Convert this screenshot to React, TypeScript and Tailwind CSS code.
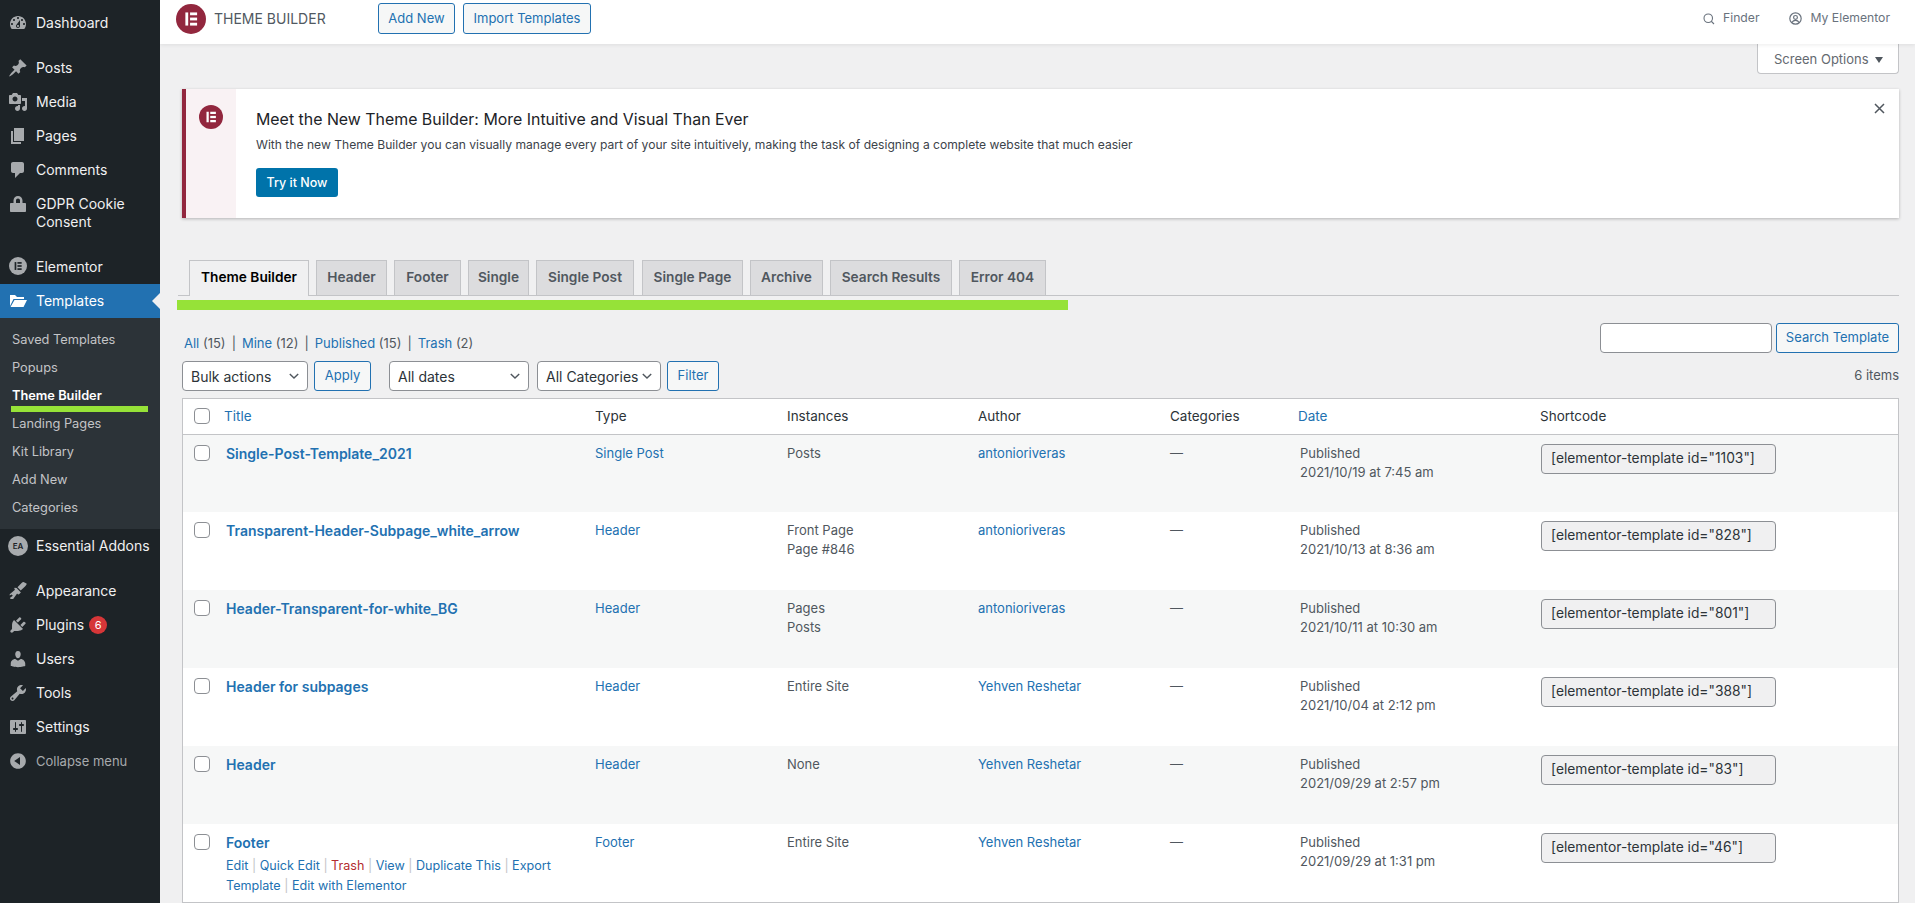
import React from "react";

const I: Record<string, string> = {
  dashboard:
    "M3.76 16h12.48c1.1-1.37 1.76-3.11 1.76-5 0-4.42-3.58-8-8-8s-8 3.58-8 8c0 1.89.66 3.63 1.76 5zM10 4c.55 0 1 .45 1 1s-.45 1-1 1-1-.45-1-1 .45-1 1-1zM6 6c.55 0 1 .45 1 1s-.45 1-1 1-1-.45-1-1 .45-1 1-1zm8 0c.55 0 1 .45 1 1s-.45 1-1 1-1-.45-1-1 .45-1 1-1zm-5.37 5.55L12 7v6c0 1.1-.9 2-2 2s-2-.9-2-2c0-.57.24-1.08.63-1.45zM4 10c.55 0 1 .45 1 1s-.45 1-1 1-1-.45-1-1 .45-1 1-1zm12 0c.55 0 1 .45 1 1s-.45 1-1 1-1-.45-1-1 .45-1 1-1zm-5 3c0-.55-.45-1-1-1s-1 .45-1 1 .45 1 1 1 1-.45 1-1z",
  post: "M10.44 3.02l1.82-1.82 6.36 6.35-1.83 1.82c-1.05-.68-2.48-.57-3.41.36l-.75.75c-.92.93-1.04 2.35-.35 3.41l-1.83 1.82-2.41-2.41-2.8 2.79c-.42.42-3.38 2.71-3.8 2.29s1.86-3.39 2.28-3.81l2.79-2.79L4.1 9.36l1.83-1.82c1.05.69 2.48.57 3.4-.36l.75-.75c.93-.92 1.05-2.35.36-3.41z",
  media:
    "M13 11V4c0-.55-.45-1-1-1h-1.67L9 1H5L3.67 3H2c-.55 0-1 .45-1 1v7c0 .55.45 1 1 1h10c.55 0 1-.45 1-1zM7 4.5c1.38 0 2.5 1.12 2.5 2.5S8.38 9.5 7 9.5 4.5 8.38 4.5 7 5.62 4.5 7 4.5zM14 6h5v10.5c0 1.38-1.12 2.5-2.5 2.5S14 17.88 14 16.5s1.12-2.5 2.5-2.5c.17 0 .34.02.5.05V9h-3V6zm-4 8.05V13h2v3.5c0 1.38-1.12 2.5-2.5 2.5S7 17.88 7 16.5 8.12 14 9.5 14c.17 0 .34.02.5.05z",
  page: "M6 15V2h10v13H6zm-1 1h8v2H3V5h2v11z",
  comments: "M5 2h9c1.1 0 2 .9 2 2v7c0 1.1-.9 2-2 2h-2l-5 5v-5H5c-1.1 0-2-.9-2-2V4c0-1.1.9-2 2-2z",
  lock: "M14.5 9H17c.55 0 1 .45 1 1v7c0 .55-.45 1-1 1H3c-.55 0-1-.45-1-1v-7c0-.55.45-1 1-1h2.5V6.5C5.5 4 7.5 2 10 2s4.500 2 4.500 4.500V9zm-2.500 0V6.500C12 5.400 11.100 4.500 10 4.500S8 5.400 8 6.500V9h4z",
  folder: "M2 4h5l2 2h7v2H5.500L2 15V4zm4.500 5H19l-3.500 7H2.500l4-7z",
  brush: "M18.500 2.500c.5.500-.2 1.700-1.500 2.900l-4.300 4.100-3.200-3.200 4.100-4.300c1.200-1.300 2.400-1.000 2.900-.5zM8.600 7.100l4.300 4.300-1.600 1.600c-.5.500-1.300.5-1.800 0l-.4-.4-3.900 5.400H2.800l-1-1 3-2.300-1.200-1.200-1.900 1v-1.300l5.300-4.500-.4-.4c-.4-.5-.4-1.200 0-1.600z",
  plugin:
    "M13.11 4.360L9.870 7.600 8 5.730l3.240-3.240c.35-.34 1.050-.2 1.560.32.52.51.66 1.210.31 1.550zm-8 1.770l.91-1.120 9.010 9.010-1.190.84c-.71.71-2.630 1.160-3.820 1.160H6.140L4.900 17.260c-.59.59-1.540.59-2.120 0-.59-.58-.59-1.530 0-2.120l1.240-1.240v-3.880c0-1.130.4-3.190 1.090-3.890zm7.260 3.970l3.240-3.240c.34-.35 1.040-.21 1.550.31.52.51.66 1.210.31 1.550l-3.240 3.250z",
  users:
    "M10 9.250c-2.270 0-2.730-3.440-2.730-3.440C7 4.020 7.820 2 9.970 2c2.160 0 2.980 2.020 2.710 3.810 0 0-.41 3.440-2.680 3.440zm0 2.570L12.720 10c2.390 0 4.520 2.330 4.520 4.530v2.490s-3.650 1.130-7.240 1.130c-3.650 0-7.240-1.130-7.240-1.130v-2.490c0-2.250 1.940-4.480 4.470-4.480z",
  tools:
    "M16.680 9.770c-1.340 1.340-3.300 1.670-4.950.99l-5.410 6.520c-.99.99-2.590.99-3.580 0s-.99-2.590 0-3.570l6.520-5.420c-.68-1.650-.35-3.610.99-4.950 1.280-1.280 3.120-1.620 4.720-1.060l-2.890 2.890 2.820 2.820 2.860-2.870c.53 1.580.18 3.390-1.080 4.650zM3.810 16.210c.4.39 1.040.39 1.430 0 .4-.4.4-1.040 0-1.430-.39-.4-1.030-.4-1.430 0-.39.39-.39 1.030 0 1.430z",
  settings:
    "M18 16V4c0-.55-.45-1-1-1H3c-.55 0-1 .45-1 1v12c0 .55.45 1 1 1h14c.55 0 1-.45 1-1zM8 11h1c.55 0 1 .45 1 1s-.45 1-1 1H8v1.500c0 .28-.22.5-.5.5s-.5-.22-.5-.5V13H6c-.55 0-1-.45-1-1s.45-1 1-1h1V5.500c0-.28.22-.5.5-.5s.5.22.5.5V11zm5-2h-1c-.55 0-1-.45-1-1s.45-1 1-1h1V5.500c0-.28.22-.5.5-.5s.5.22.5.5V7h1c.55 0 1 .45 1 1s-.45 1-1 1h-1v5.500c0 .28-.22.5-.5.5s-.5-.22-.5-.5V9z",
  collapse: "M10 2.160c4.330 0 7.840 3.510 7.840 7.840s-3.510 7.840-7.840 7.840S2.160 14.330 2.160 10 5.710 2.160 10 2.160zm2 11.720V6.120L6.180 9.970z",
};

function Dash({ name, white }: { name: string; white?: boolean }) {
  return (
    <svg viewBox="0 0 20 20" className={white ? "w-5 h-5 fill-white" : "w-5 h-5 fill-[#a7aaad]"} fillRule="evenodd">
      <path d={I[name]} />
    </svg>
  );
}

function ELogo({ size, bg, fg }: { size: number; bg: string; fg: string }) {
  return (
    <svg width={size} height={size} viewBox="0 0 32 32">
      <circle cx="16" cy="16" r="16" fill={bg} />
      <rect x="10" y="9" width="3" height="14" fill={fg} />
      <rect x="15" y="9" width="7.500" height="3" fill={fg} />
      <rect x="15" y="14.500" width="7.500" height="3" fill={fg} />
      <rect x="15" y="20" width="7.500" height="3" fill={fg} />
    </svg>
  );
}

function MenuItem({ icon, label, children }: { icon: React.ReactNode; label: React.ReactNode; children?: React.ReactNode }) {
  return (
    <div className="flex items-start h-[34px] pt-2 text-[#f0f0f1] text-[14px] leading-[18px]">
      <div className="w-9 flex justify-center pl-0 -mt-px shrink-0">{icon}</div>
      <span>{label}</span>
      {children}
    </div>
  );
}

function Sidebar() {
  const subs = ["Saved Templates", "Popups", "Theme Builder", "Landing Pages", "Kit Library", "Add New", "Categories"];
  return (
    <aside className="w-[160px] shrink-0 bg-[#1d2327] h-[903px] pt-[6px]">
      <MenuItem icon={<Dash name="dashboard" />} label="Dashboard" />
      <div className="h-[11px]" />
      <MenuItem icon={<Dash name="post" />} label="Posts" />
      <MenuItem icon={<Dash name="media" />} label="Media" />
      <MenuItem icon={<Dash name="page" />} label="Pages" />
      <MenuItem icon={<Dash name="comments" />} label="Comments" />
      <div className="flex items-start h-[52px] pt-2 text-[#f0f0f1] text-[14px] leading-[18px]">
        <div className="w-9 flex justify-center -mt-px shrink-0">
          <Dash name="lock" />
        </div>
        <span>
          GDPR Cookie
          <br />
          Consent
        </span>
      </div>
      <div className="h-[11px]" />
      <MenuItem icon={<ELogo size={18} bg="#a7aaad" fg="#1d2327" />} label="Elementor" />
      <div className="relative flex items-start h-[34px] pt-2 bg-[#2271b1] text-white text-[14px] leading-[18px]">
        <div className="w-9 flex justify-center -mt-px shrink-0">
          <Dash name="folder" white />
        </div>
        <span>Templates</span>
        <div className="absolute right-0 top-[9px] w-0 h-0 border-y-[8px] border-y-transparent border-r-[8px] border-r-[#f0f0f1]" />
      </div>
      <div className="bg-[#2c3338] pt-[8px] pb-[7px]">
        {subs.map((s) =>
          s === "Theme Builder" ? (
            <div key={s} className="relative h-7 pl-3 text-[12.800px] leading-7 font-semibold text-white">
              {s}
              <div className="absolute left-[11px] top-[24px] w-[137px] h-[6px] bg-[#96e238]" />
            </div>
          ) : (
            <div key={s} className="h-7 pl-3 text-[12.800px] leading-7 text-[#c3c4c7]">
              {s}
            </div>
          )
        )}
      </div>
      <MenuItem
        icon={
          <div className="w-5 h-5 rounded-full bg-[#a7aaad] text-[#1d2327] text-[8px] leading-5 text-center font-semibold">
            EA
          </div>
        }
        label="Essential Addons"
      />
      <div className="h-[11px]" />
      <MenuItem icon={<Dash name="brush" />} label="Appearance" />
      <MenuItem icon={<Dash name="plugin" />} label="Plugins">
        <span className="ml-[5px] w-[18px] h-[18px] rounded-full bg-[#d63638] text-white text-[11px] leading-[18px] text-center">
          6
        </span>
      </MenuItem>
      <MenuItem icon={<Dash name="users" />} label="Users" />
      <MenuItem icon={<Dash name="tools" />} label="Tools" />
      <MenuItem icon={<Dash name="settings" />} label="Settings" />
      <div className="flex items-start h-[34px] pt-2 text-[#a7aaad] text-[13px] leading-[18px]">
        <div className="w-9 flex justify-center -mt-px shrink-0">
          <Dash name="collapse" />
        </div>
        <span>Collapse menu</span>
      </div>
    </aside>
  );
}

function Chevron() {
  return (
    <svg width="14" height="14" viewBox="0 0 20 20" className="shrink-0">
      <path d="M4 7l6 6 6-6" fill="none" stroke="#50575e" strokeWidth="2" />
    </svg>
  );
}

function Select({ label, w }: { label: string; w: string }) {
  return (
    <div className={`${w} h-[30px] bg-white border border-[#8c8f94] rounded-[4px] flex items-center justify-between pl-2 pr-[6px] text-[14px] whitespace-nowrap text-[#2c3338]`}>
      <span>{label}</span>
      <Chevron />
    </div>
  );
}

function SecBtn({ children, w }: { children: React.ReactNode; w: string }) {
  return (
    <div className={`${w} h-[30px] bg-[#f6f7f7] border border-[#2271b1] rounded-[3px] flex items-center justify-center text-[13px] text-[#2271b1]`}>
      {children}
    </div>
  );
}

function Topbar() {
  return (
    <header className="h-[44px] bg-white shadow-[0_1px_4px_rgba(0,0,0,0.08)] flex items-start pt-[3px] relative z-10">
      <div className="ml-4 mt-px">
        <ELogo size={30} bg="#92273e" fg="#ffffff" />
      </div>
      <div className="ml-2 mt-[6px] text-[14px] leading-[20px] text-[#515962] w-[164px]">THEME BUILDER</div>
      <div className="w-[77px] h-[31px] bg-[#f6f7f7] border border-[#2271b1] rounded-[3px] flex items-center justify-center text-[13px] text-[#2271b1]">
        Add New
      </div>
      <div className="ml-2 w-[128px] h-[31px] bg-[#f6f7f7] border border-[#2271b1] rounded-[3px] flex items-center justify-center text-[13px] text-[#2271b1]">
        Import Templates
      </div>
      <div className="ml-auto flex items-center h-[31px] text-[12.200px] text-[#69727d] pr-[25px]">
        <svg width="12" height="12" viewBox="0 0 24 24" fill="none" stroke="#69727d" strokeWidth="2.200">
          <circle cx="10.500" cy="10.500" r="8.500" />
          <path d="M16.500 16.500L22 22" />
        </svg>
        <span className="ml-[8px]">Finder</span>
        <svg className="ml-[29px]" width="13" height="13" viewBox="0 0 24 24" fill="none" stroke="#69727d" strokeWidth="2.200">
          <circle cx="12" cy="12" r="10.500" />
          <circle cx="12" cy="10" r="3.500" />
          <path d="M5.500 19.500c1.500-3 3.500-4 6.500-4s5 1 6.500 4" />
        </svg>
        <span className="ml-[9px]">My Elementor</span>
      </div>
    </header>
  );
}

function Notice() {
  return (
    <div className="flex h-[129px] bg-white border-l-4 border-l-[#92273e] shadow-[0_1px_3px_rgba(0,0,0,0.25)] relative">
      <div className="w-[50px] bg-[#f9f2f4] flex justify-center pt-4">
        <ELogo size={24} bg="#92273e" fg="#ffffff" />
      </div>
      <div className="pl-5 pt-[20px]">
        <div className="text-[15.900px] leading-[22px] font-normal text-[#1d2327]">
          Meet the New Theme Builder: More Intuitive and Visual Than Ever
        </div>
        <div className="mt-[4px] text-[12.100px] leading-[20px] text-[#3c434a]">
          With the new Theme Builder you can visually manage every part of your site intuitively, making the task of designing a complete website that much easier
        </div>
        <div className="mt-[13px] w-[82px] h-[29px] pt-px bg-[#0073aa] rounded-[3px] text-white text-[12.500px] font-medium flex items-center justify-center">
          Try it Now
        </div>
      </div>
      <svg className="absolute right-[14px] top-[14px]" width="11" height="11" viewBox="0 0 11 11" stroke="#50575e" strokeWidth="1.500">
        <path d="M1 1l9 9M10 1l-9 9" />
      </svg>
    </div>
  );
}

function Tabs() {
  const tabs: [string, string][] = [
    ["Header", "w-[71px]"],
    ["Footer", "w-[67px]"],
    ["Single", "w-[61px]"],
    ["Single Post", "w-[98px] mr-px"],
    ["Single Page", "w-[101px]"],
    ["Archive", "w-[73px]"],
    ["Search Results", "w-[122px]"],
    ["Error 404", "w-[87px]"],
  ];
  return (
    <div className="-ml-1 flex items-end gap-[7px] h-[36px] pl-[11px] border-b border-[#c3c4c7] mt-[42px]">
      <div className="w-[120px] h-[36px] -mb-px pb-[2px] bg-[#f0f0f1] border border-[#c3c4c7] border-b-0 flex items-center justify-center text-[13.700px] font-semibold text-black">
        Theme Builder
      </div>
      {tabs.map(([t, w]) => (
        <div
          key={t}
          className={`${w} h-[35px] pb-[2px] bg-[#dcdcde] border border-[#c3c4c7] border-b-0 flex items-center justify-center text-[13.700px] font-semibold text-[#50575e]`}
        >
          {t}
        </div>
      ))}
    </div>
  );
}

const L = ({ children }: { children: React.ReactNode }) => <span className="text-[#2271b1]">{children}</span>;

const rows = [
  { t: "Single-Post-Template_2021", ty: "Single Post", ins: ["Posts"], a: "antonioriveras", d: "2021/10/19 at 7:45 am", id: "1103" },
  { t: "Transparent-Header-Subpage_white_arrow", ty: "Header", ins: ["Front Page", "Page #846"], a: "antonioriveras", d: "2021/10/13 at 8:36 am", id: "828" },
  { t: "Header-Transparent-for-white_BG", ty: "Header", ins: ["Pages", "Posts"], a: "antonioriveras", d: "2021/10/11 at 10:30 am", id: "801" },
  { t: "Header for subpages", ty: "Header", ins: ["Entire Site"], a: "Yehven Reshetar", d: "2021/10/04 at 2:12 pm", id: "388" },
  { t: "Header", ty: "Header", ins: ["None"], a: "Yehven Reshetar", d: "2021/09/29 at 2:57 pm", id: "83" },
  { t: "Footer", ty: "Footer", ins: ["Entire Site"], a: "Yehven Reshetar", d: "2021/09/29 at 1:31 pm", id: "46", actions: true },
];

function Cb() {
  return <div className="w-4 h-4 bg-white border border-[#8c8f94] rounded-[4px]" />;
}

function Sep() {
  return <span className="text-[#c3c4c7] mx-[3.500px]">|</span>;
}

function Table() {
  return (
    <div className="mt-[7px] border border-[#c3c4c7] bg-white h-[505px] overflow-hidden">
      <table className="table-fixed w-[1715px] border-collapse text-[13px] leading-[19px] text-[#50575e]">
        <colgroup>
          <col className="w-[34px]" />
          <col className="w-[368px]" />
          <col className="w-[192px]" />
          <col className="w-[191px]" />
          <col className="w-[192px]" />
          <col className="w-[130px]" />
          <col className="w-[240px]" />
          <col className="w-[368px]" />
        </colgroup>
        <thead>
          <tr className="h-[35px] border-b border-[#c3c4c7] text-[13.500px] text-left">
            <th className="pl-[11px] font-normal">
              <Cb />
            </th>
            <th className="pl-[7px] pt-px font-normal text-[#2271b1]">Title</th>
            <th className="pl-[10px] pt-px font-normal text-[#2c3338]">Type</th>
            <th className="pl-[10px] pt-px font-normal text-[#2c3338]">Instances</th>
            <th className="pl-[10px] pt-px font-normal text-[#2c3338]">Author</th>
            <th className="pl-[10px] pt-px font-normal text-[#2c3338]">Categories</th>
            <th className="pl-[8px] pt-px font-normal text-[#2271b1]">Date</th>
            <th className="pl-[10px] pt-px font-normal text-[#2c3338]">Shortcode</th>
          </tr>
        </thead>
        <tbody>
          {rows.map((r, i) => (
            <tr key={r.t} className={i % 2 === 0 ? "bg-[#f6f7f7] h-[78px] align-top" : "bg-white h-[78px] align-top"}>
              <td className="pl-[11px] pt-[10px]">
                <Cb />
              </td>
              <td className="pl-[9px] pt-[9px] pr-[10px]">
                <div className="text-[14px] font-semibold text-[#2271b1]">{r.t}</div>
                {r.actions && (
                  <div className="mt-[4px] text-[12.600px] leading-[19.500px] text-[#2271b1]">
                    <div>
                      <span>Edit</span>
                      <Sep />
                      <span>Quick Edit</span>
                      <Sep />
                      <span className="text-[#b32d2e]">Trash</span>
                      <Sep />
                      <span>View</span>
                      <Sep />
                      <span>Duplicate This</span>
                      <Sep />
                      <span>Export</span>
                    </div>
                    <div>
                      <span>Template</span>
                      <Sep />
                      <span>Edit with Elementor</span>
                    </div>
                  </div>
                )}
              </td>
              <td className="pl-[10px] pt-[9px]"><L>{r.ty}</L></td>
              <td className="pl-[10px] pt-[9px]">
                {r.ins.map((x) => (
                  <div key={x}>{x}</div>
                ))}
              </td>
              <td className="pl-[10px] pt-[9px]"><L>{r.a}</L></td>
              <td className="pl-[10px] pt-[9px]">—</td>
              <td className="pl-[10px] pt-[9px]">
                <div>Published</div>
                <div>{r.d}</div>
              </td>
              <td className="pl-[11px] pt-[9px]">
                <div className="w-[235px] h-[30px] pb-px bg-[#f0f0f1] border border-[#8c8f94] rounded-[4px] pl-[9px] flex items-center text-[13.800px] text-[#2c3338]">
                  [elementor-template id="{r.id}"]
                </div>
              </td>
            </tr>
          ))}
        </tbody>
      </table>
    </div>
  );
}

function Main() {
  return (
    <main className="flex-1 min-w-0 h-[903px] overflow-hidden">
      <Topbar />
      <div className="pl-[22px] pr-4">
        <div className="flex justify-end">
          <div className="w-[142px] h-[30px] pt-[2px] bg-white border border-t-0 border-[#c3c4c7] rounded-b-[4px] flex items-center pl-4 text-[13px] text-[#646970]">
            Screen Options
            <span className="ml-[6px] w-0 h-0 border-x-[4px] border-x-transparent border-t-[6px] border-t-[#50575e]" />
          </div>
        </div>
        <div className="mt-[15px]">
          <Notice />
        </div>
        <Tabs />
        <div className="-ml-[5px] mt-[4px] w-[891px] h-[10px] bg-[#96e238]" />
        <div className="mt-[13px] flex items-start justify-between h-[30px]">
          <div className="pl-[2px] pt-[11px] text-[13px] leading-[18px] text-[#50575e]">
            <L>All</L> (15)<span className="px-[6px]">|</span><L>Mine</L> (12)<span className="px-[6px]">|</span><L>Published</L> (15)<span className="px-[6px]">|</span><L>Trash</L> (2)
          </div>
          <div className="flex gap-1">
            <div className="w-[172px] h-[30px] bg-white border border-[#8c8f94] rounded-[4px]" />
            <SecBtn w="w-[123px]">Search Template</SecBtn>
          </div>
        </div>
        <div className="mt-[8px] flex items-center h-[30px]">
          <Select label="Bulk actions" w="w-[126px]" />
          <div className="ml-[6px]">
            <SecBtn w="w-[57px]">Apply</SecBtn>
          </div>
          <div className="ml-[18px]">
            <Select label="All dates" w="w-[140px]" />
          </div>
          <div className="ml-2">
            <Select label="All Categories" w="w-[124px]" />
          </div>
          <div className="ml-[6px]">
            <SecBtn w="w-[52px]">Filter</SecBtn>
          </div>
          <div className="ml-auto text-[13px] text-[#50575e]">6 items</div>
        </div>
        <Table />
      </div>
    </main>
  );
}

export default function App() {
  return (
    <div className="flex w-[1915px] h-[903px] overflow-hidden bg-[#f0f0f1] [font-family:Inter,sans-serif]">
      <Sidebar />
      <Main />
    </div>
  );
}
